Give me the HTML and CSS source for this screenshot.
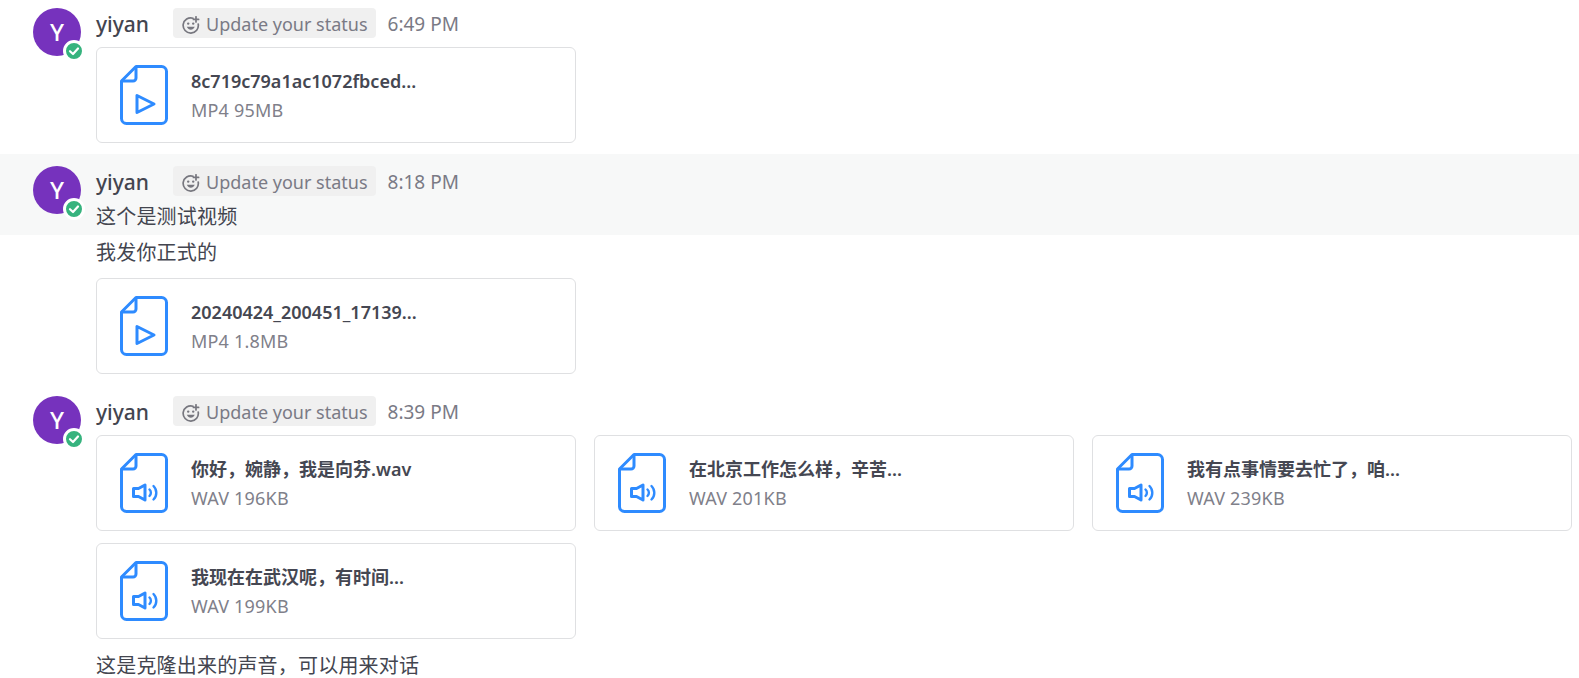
FILE: index.html
```html
<!DOCTYPE html>
<html lang="en">
<head>
<meta charset="utf-8">
<title>Chat</title>
<link rel="stylesheet" href="styles.css">
</head>
<body>
<svg class="defs" width="0" height="0" aria-hidden="true">
  <symbol id="file" viewBox="0 0 48 60">
    <path d="M16 1.500H41.500a5 5 0 0 1 5 5V53.500a5 5 0 0 1-5 5H6.500a5 5 0 0 1-5-5V16z" fill="none" stroke="#2e8bff" stroke-width="3" stroke-linejoin="round"/>
    <path d="M16 1.500V13a3 3 0 0 1-3 3H1.500" fill="none" stroke="#2e8bff" stroke-width="3" stroke-linejoin="round"/>
  </symbol>
  <symbol id="play" viewBox="0 0 48 60">
    <path d="M17 30.500V47.500L34 39z" fill="none" stroke="#2e8bff" stroke-width="3" stroke-linejoin="round"/>
  </symbol>
  <symbol id="sound" viewBox="0 0 48 60">
    <path d="M13.500 35.500H18.500L25 32V47L18.500 43.500H13.500z" fill="none" stroke="#2e8bff" stroke-width="3" stroke-linejoin="round"/>
    <path d="M29.500 36.500a4.500 4.500 0 0 1 0 6.500" fill="none" stroke="#2e8bff" stroke-width="2.400" stroke-linecap="round"/>
    <path d="M33.500 33a9.500 9.500 0 0 1 0 13.500" fill="none" stroke="#2e8bff" stroke-width="2.400" stroke-linecap="round"/>
  </symbol>
  <symbol id="smile" viewBox="0 0 18 18">
    <path d="M11 2.200A7.600 7.600 0 1 0 16.200 8" fill="none" stroke="#77777f" stroke-width="1.700" stroke-linecap="round"/>
    <path d="M14 .8V6M11.400 3.400H16.600" fill="none" stroke="#77777f" stroke-width="1.700" stroke-linecap="round"/>
    <circle cx="6.200" cy="7.600" r="1.200" fill="#77777f"/>
    <circle cx="11.200" cy="7.600" r="1.200" fill="#77777f"/>
    <path d="M4.800 10.800c.9 2 2.400 2.900 4 2.900s3.100-.9 4-2.900z" fill="#77777f"/>
  </symbol>
  <symbol id="check" viewBox="0 0 16 16">
    <path d="M4 8.200 7 11 12 5.500" fill="none" stroke="#fff" stroke-width="2.200" stroke-linecap="round" stroke-linejoin="round"/>
  </symbol>
</svg>

<main class="chat">
  <section class="msg msg-first">
    <div class="avatar">Y<span class="badge"><svg class="check"><use href="#check"/></svg></span></div>
    <div class="body">
      <div class="head">
        <span class="name">yiyan</span>
        <span class="status"><svg class="smile"><use href="#smile"/></svg>Update your status</span>
        <span class="time">6:49 PM</span>
      </div>
      <div class="files">
        <article class="file">
          <svg class="ficon"><use href="#file"/><use href="#play"/></svg>
          <div class="info"><div class="title">8c719c79a1ac1072fbced...</div><div class="meta">MP4 95MB</div></div>
        </article>
      </div>
    </div>
  </section>

  <section class="msg msg-hover">
    <div class="avatar">Y<span class="badge"><svg class="check"><use href="#check"/></svg></span></div>
    <div class="body">
      <div class="head">
        <span class="name">yiyan</span>
        <span class="status"><svg class="smile"><use href="#smile"/></svg>Update your status</span>
        <span class="time">8:18 PM</span>
      </div>
      <p class="text text-hover">这个是测试视频</p>
    </div>
  </section>

  <section class="cont">
    <p class="text">我发你正式的</p>
    <div class="files files-cont">
      <article class="file">
        <svg class="ficon"><use href="#file"/><use href="#play"/></svg>
        <div class="info"><div class="title">20240424_200451_17139...</div><div class="meta">MP4 1.8MB</div></div>
      </article>
    </div>
  </section>

  <section class="msg msg-third">
    <div class="avatar">Y<span class="badge"><svg class="check"><use href="#check"/></svg></span></div>
    <div class="body">
      <div class="head">
        <span class="name">yiyan</span>
        <span class="status"><svg class="smile"><use href="#smile"/></svg>Update your status</span>
        <span class="time">8:39 PM</span>
      </div>
      <div class="files">
        <article class="file">
          <svg class="ficon"><use href="#file"/><use href="#sound"/></svg>
          <div class="info"><div class="title">你好，婉静，我是向芬.wav</div><div class="meta">WAV 196KB</div></div>
        </article>
        <article class="file">
          <svg class="ficon"><use href="#file"/><use href="#sound"/></svg>
          <div class="info"><div class="title">在北京工作怎么样，辛苦...</div><div class="meta">WAV 201KB</div></div>
        </article>
        <article class="file">
          <svg class="ficon"><use href="#file"/><use href="#sound"/></svg>
          <div class="info"><div class="title">我有点事情要去忙了，咱...</div><div class="meta">WAV 239KB</div></div>
        </article>
        <article class="file">
          <svg class="ficon"><use href="#file"/><use href="#sound"/></svg>
          <div class="info"><div class="title">我现在在武汉呢，有时间...</div><div class="meta">WAV 199KB</div></div>
        </article>
      </div>
      <p class="text text-last">这是克隆出来的声音，可以用来对话</p>
    </div>
  </section>
</main>
</body>
</html>
```

FILE: styles.css
```css
html, body {
  margin: 0;
  padding: 0;
  height: 678px;
  overflow: hidden;
  background: #fff;
}

body {
  font-family: "Noto Sans", "Noto Sans CJK SC", sans-serif;
  color: #3d3f4a;
}

.defs {
  position: absolute;
}

.msg {
  display: flex;
  gap: 15px;
  padding-left: 33px;
}

.msg-first {
  padding-top: 8px;
  height: 146px;
}

.msg-hover {
  padding-top: 12px;
  height: 69px;
  background: #f7f8f8;
}

.msg-third {
  padding-top: 22px;
}

.cont {
  padding-left: 96px;
}

.avatar {
  position: relative;
  flex: none;
  width: 48px;
  height: 48px;
  border-radius: 50%;
  background: #7632bd;
  color: #fff;
  font-size: 24px;
  font-weight: 500;
  line-height: 48px;
  text-align: center;
}

.badge {
  position: absolute;
  right: -4px;
  bottom: -6px;
  width: 16px;
  height: 16px;
  border: 3px solid #fff;
  border-radius: 50%;
  background: #36b37e;
  display: flex;
}

.check {
  width: 16px;
  height: 16px;
}

.head {
  display: flex;
  align-items: center;
  height: 30px;
}

.name {
  padding-top: 2px;
  font-size: 21px;
  font-weight: 500;
  color: #43454f;
  margin-right: 24px;
}

.status {
  box-sizing: border-box;
  display: flex;
  align-items: center;
  gap: 6px;
  height: 30px;
  padding: 2px 8px 0 9px;
  border-radius: 4px;
  background: #f0f0f0;
  color: #7a7a85;
  font-size: 18px;
}

.smile {
  width: 18px;
  height: 18px;
  margin-top: 2px;
}

.time {
  padding-top: 2px;
  margin-left: 12px;
  font-size: 19px;
  color: #7a7a85;
}

.text {
  margin: 0;
  font-size: 20px;
  line-height: 36px;
  letter-spacing: 0.2px;
  color: #43454f;
}

.text-hover {
  margin-top: 3px;
}

.text-last {
  margin-top: 15px;
  line-height: 24px;
}

.files {
  display: grid;
  grid-template-columns: repeat(3, 480px);
  gap: 12px 18px;
  margin-top: 9px;
}

.files-cont {
  margin-top: 7px;
}

.file {
  box-sizing: border-box;
  display: flex;
  align-items: center;
  gap: 23px;
  height: 96px;
  padding-left: 23px;
  border: 1px solid #dfe0e2;
  border-radius: 6px;
  background: #fff;
}

.ficon {
  flex: none;
  width: 48px;
  height: 60px;
}

.title {
  font-size: 18px;
  font-weight: 600;
  line-height: 26px;
  color: #454752;
}

.meta {
  margin-top: 3px;
  font-size: 18px;
  line-height: 26px;
  letter-spacing: 0.2px;
  color: #80808a;
}
```
